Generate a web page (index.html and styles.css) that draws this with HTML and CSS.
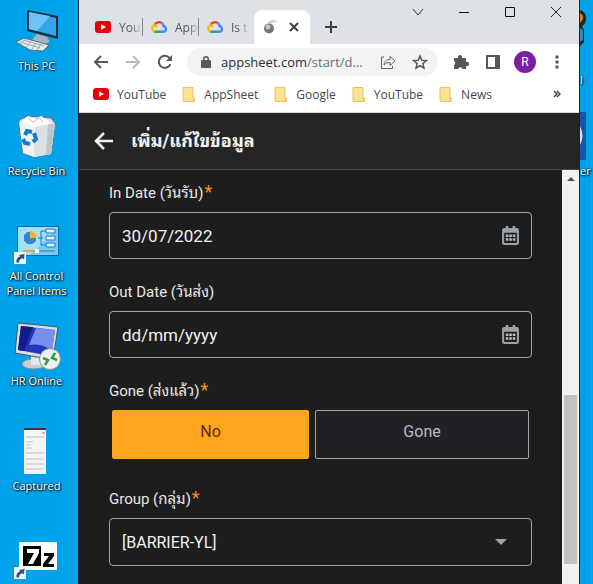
FILE: index.html
```html
<!DOCTYPE html>
<html lang="th">
<head>
<meta charset="utf-8">
<meta name="viewport" content="width=device-width, initial-scale=1">
<title>เพิ่ม/แก้ไขข้อมูล</title>
<link rel="stylesheet" href="styles.css">
</head>
<body>
<svg class="defs" aria-hidden="true">
  <defs>
    <symbol id="youtube" viewBox="0 0 16 16"><rect y="2" width="16" height="12" rx="3" fill="#e6000f"/><path d="M6 5.300l5 2.700-5 2.700z" fill="#fff"/></symbol>
    <symbol id="cloud" viewBox="0 0 16 14">
      <path d="M3.500 5.300A4.800 4.800 0 0 1 11 3.200" fill="none" stroke="#ea4335" stroke-width="2.400"/>
      <path d="M11 3.200A5 5 0 0 1 12.600 6a3 3 0 0 1 .8 5.500L8 11.700" fill="none" stroke="#4285f4" stroke-width="2.400"/>
      <path d="M8.500 11.700H4.300a3 3 0 0 1-1.500-.4" fill="none" stroke="#34a853" stroke-width="2.400"/>
      <path d="M3.400 11.500A3.200 3.200 0 0 1 3.700 5.400c1.200 0 2 .4 2.700 1.200" fill="none" stroke="#fbbc05" stroke-width="2.400"/>
    </symbol>
    <symbol id="folder" viewBox="0 0 13 15"><path d="M.5.500h10v10.500h1.500v3.500H.5z" fill="#fde293" stroke="#e9c55b"/><path d="M10.500 10.500V14" stroke="#e9c55b"/></symbol>
    <symbol id="calendar" viewBox="0 0 16 18">
      <path fill-rule="evenodd" d="M2 2h1.500V0h2.500V2h4V0h2.500V2H14a2 2 0 0 1 2 2v12a2 2 0 0 1-2 2H2a2 2 0 0 1-2-2V4a2 2 0 0 1 2-2zm0 4.500V16h12V6.500z" fill="#98a2a9"/>
      <path d="M3.500 8h2.500v2.500H3.500zm3.300 0h2.500v2.500H6.800zm3.300 0h2.500v2.500h-2.500zM3.500 11.500h2.500V14H3.500zm3.300 0h2.500V14H6.800zm3.300 0h2.500V14h-2.500z" fill="#b0babf"/>
    </symbol>
    <symbol id="shortcut" viewBox="0 0 12 12"><rect width="12" height="12" fill="#f4f6f8"/><path d="M2.500 10.500C2 7 4 4.800 6.200 4.600L5 3l5.500-1-.5 5.500-1.500-1.300C6.500 6.400 5 8 5 10.500z" fill="#27538f"/></symbol>
  </defs>
</svg>
<div class="desktop">
  <nav class="shortcuts" aria-label="Desktop">
    <a class="shortcut" href="#">
      <svg width="44" height="44" viewBox="0 0 44 44"><path d="M12 1l31 6v23L12 22z" fill="#222b38"/><path d="M14 3l27 6v18L14 20z" fill="#35a6ee"/><path d="M14 3l21 4-13 15-8-2z" fill="#6cc3f7"/><path d="M22 25l10 3 3 5-5 2-13-4z" fill="#a9b3be"/><path d="M1 33l8-4 25 7-6 6-13-1z" fill="#e9edf1" stroke="#5e6b79"/><path d="M5 33l20 6M8 31l21 6M11 30l-6 5M16 32l-5 6M21 34l-4 6M26 35l-4 6" stroke="#9ba7b3"/></svg>
      <span>This PC</span>
    </a>
    <a class="shortcut" href="#">
      <svg width="40" height="44" viewBox="0 0 40 44"><path d="M2 6l9-4 23 2 4 5-4 31-17 3-11-4z" fill="#d9dfe3" stroke="#6a747b"/><path d="M2 8l16 5 20-4-4 31-17 3-11-4z" fill="#f0f2f3"/><path d="M18 13l20-4-4 31-17 3z" fill="#dbe0e2"/><path d="M31 11l7-2-4 31-5 1z" fill="#bdc6ca"/><path d="M4 8l7-6 7 3 6-3 11 7-17 4z" fill="#fff"/><path d="M11 4l5 4 6-4 4 4M31 15l5 4-6 4 5 5-6 4" fill="none" stroke="#b5bfc4"/><g fill="none" stroke="#187bd0" stroke-width="4"><path d="M8 21l2-4 5 1"/><path d="M17 19l2 6-3 3"/><path d="M13 30l-5-1-2-4"/></g></svg>
      <span>Recycle Bin</span>
    </a>
    <a class="shortcut" href="#">
      <svg width="48" height="48" viewBox="0 -5 48 48"><rect x="4.500" y="4.500" width="41" height="29" fill="#79cdf4" stroke="#0c6ead"/><path d="M5 5h40L17 33H5z" fill="#a4def8"/><circle cx="17" cy="16" r="7" fill="#3286d4" stroke="#d9f0fb"/><path d="M17 16V9a7 7 0 0 1 7 7z" fill="#f5b52e"/><path d="M25 16h5M28 9v14M28 9h5M28 23h5" fill="none" stroke="#1978be"/><path d="M33 7h9v4h-9zM33 14h9v4h-9zM33 21h9v4h-9z" fill="#def3fc" stroke="#1978be"/><path d="M10 29h12" stroke="#e2a73b" stroke-width="2"/><path d="M22 29h20" stroke="#1978be"/><rect x="22" y="27" width="4" height="4" fill="#fff"/><use href="#shortcut" x="1" y="30" width="12" height="12"/></svg>
      <span>All Control Panel Items</span>
    </a>
    <a class="shortcut" href="#">
      <svg width="48" height="48" viewBox="0 0 48 48"><ellipse cx="21" cy="42" rx="12" ry="5" fill="#c9ccd0" stroke="#858b91"/><path d="M18 34l11 2v7H18z" fill="#e3e5e7"/><path d="M5 1l40 4-5 33L2 31z" fill="#d8dde2" stroke="#4b535c"/><path d="M8 4l34 4-4 26L5 28z" fill="#2636bc"/><path d="M8 4l12 1-9 24-6-1z" fill="#101e8c"/><path d="M23 6l19 2-3 22c-5-6-13-9-23-7z" fill="#7690ec"/><circle cx="37" cy="37" r="10.500" fill="#eef0ef" stroke="#8f9695"/><path d="M30 36l5 2-3 5M42 31l-3 5 5 2" fill="none" stroke="#349d3c" stroke-width="2.500"/></svg>
      <span>HR Online</span>
    </a>
    <a class="shortcut" href="#">
      <svg class="page" width="22" height="46" viewBox="0 0 22 46"><path d="M0 0h22v46H0z" fill="#f5f5f5"/><path d="M0 0h22v2H0z" fill="#34383c"/><path d="M2 9h18M2 14h7M2 17h5M2 20h6M2 25h18M2 31h18M2 36h18M2 41h17" stroke="#bbc0c3"/><path d="M18 5h3" stroke="#ed5959"/></svg>
      <span>Captured</span>
    </a>
    <a class="shortcut last" href="#" aria-label="7-Zip">
      <svg width="48" height="40" viewBox="0 0 48 40"><rect x="6" y="1" width="38" height="28" fill="#fff"/><rect x="10" y="5" width="18" height="20"/><path d="M14 8h12v4l-6 11h-5l6-11h-7z" fill="#fff"/><path d="M31 12h10v3l-6 8h6v3H30v-3l6-8h-5z"/><use href="#shortcut" x="1" y="26" width="12" height="12"/></svg>
    </a>
  </nav>

  <div class="window">
    <header class="tab-strip">
      <div class="tabs">
        <button class="tab"><svg width="16" height="16"><use href="#youtube"/></svg><span>You</span></button>
        <button class="tab"><svg width="16" height="14"><use href="#cloud"/></svg><span>App</span></button>
        <button class="tab"><svg width="16" height="14"><use href="#cloud"/></svg><span>Is t</span></button>
        <button class="tab active" aria-label="เพิ่ม/แก้ไขข้อมูล"><svg width="16" height="16" viewBox="0 0 16 16"><circle cx="6" cy="9.500" r="5" fill="#777"/><circle cx="5" cy="8" r="2.500" fill="#c7c7c7"/><path d="M4 4c3-4 9-4 11 0l-4-1-3 2z" fill="#d2d2d2"/></svg><svg width="10" height="10" viewBox="0 0 10 10"><path d="M1 1l8 8M9 1L1 9" stroke="#3c4043" stroke-width="2"/></svg></button>
      </div>
      <button class="new-tab" aria-label="New tab"><svg width="14" height="14" viewBox="0 0 14 14"><path d="M7 1v12M1 7h12" stroke="#3c4043" stroke-width="2"/></svg></button>
      <div class="window-controls">
        <button aria-label="Search tabs"><svg width="12" height="12" viewBox="0 0 12 12"><path d="M1 3l5 6 5-6" fill="none" stroke="#333"/></svg></button>
        <button aria-label="Minimize"><svg width="12" height="12" viewBox="0 0 12 12"><path d="M1 6.500h10" stroke="#111"/></svg></button>
        <button aria-label="Maximize"><svg width="12" height="12" viewBox="0 0 12 12"><path d="M1.500 1.500h9v9h-9z" fill="none" stroke="#111"/></svg></button>
        <button aria-label="Close"><svg width="12" height="12" viewBox="0 0 12 12"><path d="M1 1l10 10M11 1L1 11" stroke="#222"/></svg></button>
      </div>
    </header>

    <div class="toolbar">
      <button aria-label="Back"><svg width="16" height="16" viewBox="0 0 16 16"><path d="M15 8H2M8 2L2 8l6 6" fill="none" stroke="#55595d" stroke-width="2"/></svg></button>
      <button aria-label="Forward"><svg width="16" height="16" viewBox="0 0 16 16"><path d="M1 8h13M8 2l6 6-6 6" fill="none" stroke="#b9bbbe" stroke-width="2"/></svg></button>
      <button aria-label="Reload"><svg width="16" height="16" viewBox="0 0 16 16"><path d="M13.500 10A6 6 0 1 1 12.500 4L14 6" fill="none" stroke="#55595d" stroke-width="2"/><path d="M15 1v6H9z" fill="#55595d"/></svg></button>
      <div class="omnibox">
        <svg width="10" height="14" viewBox="0 0 10 14"><path fill-rule="evenodd" d="M1 5h1V4a3 3 0 0 1 6 0v1h1q1 0 1 1v6q0 1-1 1H1q-1 0-1-1V6q0-1 1-1zm2.500 0h3V4a1.500 1.500 0 0 0-3 0z" fill="#55595d"/></svg>
        <span class="url">appsheet.com<span>/start/d...</span></span>
        <button aria-label="Share"><svg width="16" height="16" viewBox="0 0 16 16"><path d="M4 3H1.500v11.500h11V12M4 11c.5-4 2.500-5.500 6-5.500V2.500L15 7l-5 4.500v-3C7.500 8.500 5.500 9 4 11z" fill="none" stroke="#5f6368"/></svg></button>
        <button aria-label="Bookmark"><svg width="16" height="16" viewBox="0 0 16 16"><path d="M8 2l1.800 4.200 4.600.4-3.500 3 1 4.500L8 11.700l-3.900 2.400 1-4.500-3.500-3 4.600-.4z" fill="none" stroke="#55595d" stroke-width="1.500"/></svg></button>
      </div>
      <button aria-label="Extensions"><svg width="16" height="16" viewBox="0 0 16 16"><path d="M1 4h4a2.200 2.200 0 1 1 4 0h4v4a2.200 2.200 0 1 1 0 4v3H9.500a2.200 2.200 0 0 0-4.300 0H1v-4a2.200 2.200 0 0 0 0-4z" fill="#55595d"/></svg></button>
      <button aria-label="Side panel"><svg width="14" height="14" viewBox="0 0 14 14"><path d="M1 1h12v12H1z" fill="none" stroke="#55595d" stroke-width="2"/><path d="M9 1h4v12H9z" fill="#55595d"/></svg></button>
      <button aria-label="Profile"><span class="avatar">R</span></button>
      <button aria-label="Menu"><svg width="4" height="14" viewBox="0 0 4 14"><path d="M.5.500h3v3h-3zm0 5h3v3h-3zm0 5h3v3h-3z" fill="#55595d"/></svg></button>
    </div>

    <nav class="bookmarks" aria-label="Bookmarks">
      <a href="#"><svg width="16" height="16"><use href="#youtube"/></svg>YouTube</a>
      <a href="#"><svg width="14" height="15"><use href="#folder"/></svg>AppSheet</a>
      <a href="#"><svg width="14" height="15"><use href="#folder"/></svg>Google</a>
      <a href="#"><svg width="14" height="15"><use href="#folder"/></svg>YouTube</a>
      <a href="#"><svg width="14" height="15"><use href="#folder"/></svg>News</a>
      <button aria-label="More bookmarks"><svg width="8" height="8" viewBox="0 0 8 8"><path d="M1 1l3 3-3 3M4 1l3 3-3 3" fill="none" stroke="#44484c" stroke-width="1.500"/></svg></button>
    </nav>

    <div class="app-bar">
      <button aria-label="Back"><svg width="20" height="20" viewBox="0 0 20 20"><path d="M19 10H2M10 2l-8 8 8 8" fill="none" stroke="#f2f2f2" stroke-width="2.500"/></svg></button>
      <h1>เพิ่ม/แก้ไขข้อมูล</h1>
    </div>

    <div class="app-body">
      <form class="form">
        <div class="field">
          <label for="in-date">In Date (วันรับ)<b>*</b></label>
          <div class="box"><input id="in-date" type="text" value="30/07/2022"><button type="button" aria-label="Pick in date"><svg width="17" height="19"><use href="#calendar"/></svg></button></div>
        </div>
        <div class="field">
          <label for="out-date">Out Date (วันส่ง)</label>
          <div class="box"><input id="out-date" type="text" placeholder="dd/mm/yyyy"><button type="button" aria-label="Pick out date"><svg width="17" height="19"><use href="#calendar"/></svg></button></div>
        </div>
        <div class="field" role="group" aria-labelledby="gone-label">
          <span class="label" id="gone-label">Gone (ส่งแล้ว)<b>*</b></span>
          <div class="choices"><button type="button" class="choice selected" aria-pressed="true">No</button><button type="button" class="choice wide" aria-pressed="false">Gone</button></div>
        </div>
        <div class="field">
          <label for="group">Group (กลุ่ม)<b>*</b></label>
          <div class="box select-box"><select id="group"><option>[BARRIER-YL]</option></select><svg width="12" height="6" viewBox="0 0 12 6"><path d="M0 0h12L6 6z" fill="#9da5ab"/></svg></div>
        </div>
      </form>
      <div class="scrollbar" aria-hidden="true">
        <svg width="8" height="4" viewBox="0 0 8 4"><path d="M4 0l4 4H0z" fill="#505050"/></svg>
        <div class="thumb"></div>
      </div>
    </div>
  </div>

  <div class="desktop-edge" aria-hidden="true">
    <div class="edge-item"><svg width="8" height="44" viewBox="0 0 8 44"><path d="M0 3q6 2 6 8t-4 8l2 4v12l-4 4z" fill="#242323"/><path d="M0 6q4 2 3 6l-3 4z" fill="#c9852c"/><path d="M0 21l3 2v10l-3 2z" fill="#3f88aa"/></svg><span>l</span></div>
    <div class="edge-item"><svg width="7" height="48" viewBox="0 0 7 48"><path d="M0 0h6v48H0z" fill="#1255a9"/><path d="M0 14q5 10 0 19z" fill="#d8e3ef"/></svg><span>er</span></div>
  </div>
</div>
</body>
</html>
```

FILE: styles.css
```css
* { box-sizing: border-box; }
body { margin: 0; background: #00a2ea; font-family: "Open Sans", "Noto Sans", sans-serif; }
button { border: 0; padding: 0; background: none; font: inherit; color: inherit; display: flex; align-items: center; justify-content: center; }
a { color: inherit; text-decoration: none; }
svg { display: block; flex: none; }
.defs { position: absolute; width: 0; height: 0; }

.desktop { display: grid; grid-template-columns: 78px minmax(0, 1fr) 13px; height: 100vh; overflow: hidden; }
.shortcuts { display: grid; grid-auto-rows: 105px; align-content: start; padding-right: 5px; }
.shortcut { display: grid; grid-template-rows: 48px auto; align-content: start; place-items: center; gap: 3px; padding: 7px 3px 0; color: #fff; font-size: 11px; line-height: 15px; text-align: center; text-shadow: 1px 1px 2px #000, 0 0 2px #000; }
.shortcut.last { padding-top: 12px; }
.shortcut .page { margin-right: 4px; }

.window { display: flex; flex-direction: column; min-width: 0; height: 100vh; border: solid #0b2a40; border-width: 0 1px; background: #fff; }
.tab-strip { display: flex; height: 44px; background: #dee1e6; flex: none; }
.tabs { display: flex; align-items: flex-end; padding-left: 7px; }
.tab { width: 56px; height: 34px; padding-left: 9px; gap: 8px; justify-content: flex-start; color: #54585c; font-size: 12px; white-space: nowrap; position: relative; }
.tab span { mask-image: linear-gradient(90deg, #000 60%, #0003); }
.tab:nth-child(-n+2)::after { content: ""; position: absolute; right: -1px; top: 8px; width: 1px; height: 18px; background: #85898e; }
.tab.active { background: #fff; border-radius: 8px 8px 0 0; gap: 10px; }
.new-tab { width: 42px; padding-top: 10px; }
.window-controls { display: flex; margin-left: auto; height: 24px; }
.window-controls button { width: 46px; }

.toolbar { display: flex; align-items: center; height: 36px; padding: 0 6px; flex: none; }
.toolbar > button { width: 32px; height: 28px; flex: none; }
.omnibox { flex: 1; min-width: 0; display: flex; align-items: center; height: 28px; margin: 0 7px 0 6px; padding: 0 2px 0 14px; border-radius: 14px; background: #f1f3f4; }
.omnibox button { width: 32px; height: 28px; flex: none; }
.url { flex: 1; min-width: 0; margin-left: 10px; overflow: hidden; white-space: nowrap; font-size: 13px; color: #2c2f33; }
.url span { color: #6a6e73; }
.avatar { width: 22px; height: 22px; border-radius: 50%; background: #7b1fa2; color: #fff; font: 12px/22px Roboto, sans-serif; }

.bookmarks { display: flex; align-items: center; gap: 16px; height: 33px; padding: 0 18px 4px 14px; border-bottom: 1px solid #d5d7d9; color: #44484c; font-size: 12px; flex: none; }
.bookmarks a { display: flex; align-items: center; gap: 8px; }
.bookmarks button { margin-left: auto; }

.app-bar { display: flex; align-items: center; gap: 17px; height: 57px; padding: 0 15px; background: #252525; border-bottom: 1px solid #464646; color: #f2f2f2; flex: none; }
.app-bar h1 { margin: 0; font: 700 18px/28px Roboto, "Noto Sans Thai Looped", Loma, Waree, "Noto Sans Thai", "Noto Sans", sans-serif; }
.app-body { display: flex; flex: 1; min-height: 0; background: #1d1d1d; color: #e8e8e8; font-family: Roboto, "Noto Sans Thai Looped", Loma, Waree, "Noto Sans Thai", "Noto Sans", sans-serif; }
.form { flex: 1; min-width: 0; display: flex; flex-direction: column; gap: 23px; padding: 13px 30px 0; overflow: hidden; }
.field { display: flex; flex-direction: column; gap: 9px; flex: none; }
.field label, .label { height: 20px; font-size: 15px; line-height: 20px; white-space: nowrap; }
.field b { margin-left: 1px; color: #f7941d; font-weight: 400; font-size: 18px; line-height: 16px; }
.box { display: flex; align-items: center; height: 47px; padding: 0 12px; border: 1px solid #a5a5a5; border-radius: 4px; }
.box input, .box select { flex: 1; min-width: 0; height: 100%; padding: 0; border: 0; outline: 0; background: none; color: #f2f2f2; font-family: inherit; font-size: 17px; appearance: none; }
.box input::placeholder { color: #f2f2f2; opacity: 1; }
.box select { font-size: 16px; }
.select-box { height: 48px; padding-right: 24px; }
.choices { display: flex; gap: 6px; padding: 0 3px 7px; }
.choice { flex: 197 1 0; height: 49px; padding-bottom: 6px; border-radius: 2px; border: 1px solid #a5a5a5; background: #202124; color: #b8bdc1; font-size: 16px; }
.choice.wide { flex-grow: 214; }
.choice.selected { border-color: #ffa41b; background: #ffa41b; color: #5b2b0c; }

.scrollbar { display: flex; flex-direction: column; align-items: center; width: 17px; padding: 7px 2px 20px; background: #f1f1f1; }
.thumb { width: 13px; height: 169px; margin-top: auto; background: #c1c1c1; }

.desktop-edge { display: grid; grid-auto-rows: 105px; align-content: start; overflow: hidden; }
.edge-item { display: flex; flex-direction: column; gap: 3px; align-items: flex-start; padding-top: 7px; color: #fff; font-size: 11px; line-height: 15px; text-shadow: 1px 1px 2px #000, 0 0 2px #000; }
.edge-item:first-child { gap: 21px; }
```
